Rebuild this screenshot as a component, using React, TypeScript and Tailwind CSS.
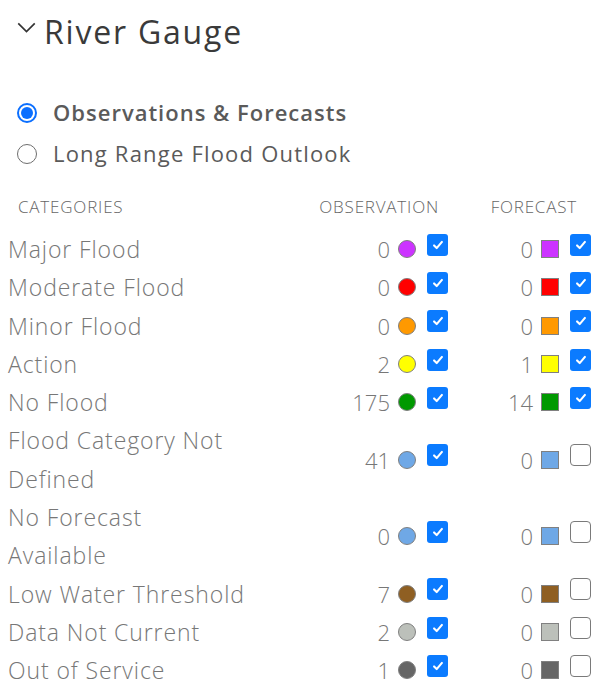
import { useState } from 'react';

type Row = {
  label: string[];
  obs: number;
  fc: number;
  color: string;
  obsOn: boolean;
  fcOn: boolean;
};

const rows: Row[] = [
  { label: ['Major Flood'], obs: 0, fc: 0, color: 'bg-[#cc33ff]', obsOn: true, fcOn: true },
  { label: ['Moderate Flood'], obs: 0, fc: 0, color: 'bg-[#ff0000]', obsOn: true, fcOn: true },
  { label: ['Minor Flood'], obs: 0, fc: 0, color: 'bg-[#ff9900]', obsOn: true, fcOn: true },
  { label: ['Action'], obs: 2, fc: 1, color: 'bg-[#ffff00]', obsOn: true, fcOn: true },
  { label: ['No Flood'], obs: 175, fc: 14, color: 'bg-[#009900]', obsOn: true, fcOn: true },
  { label: ['Flood Category Not', 'Defined'], obs: 41, fc: 0, color: 'bg-[#6fa8e6]', obsOn: true, fcOn: false },
  { label: ['No Forecast', 'Available'], obs: 0, fc: 0, color: 'bg-[#6fa8e6]', obsOn: true, fcOn: false },
  { label: ['Low Water Threshold'], obs: 7, fc: 0, color: 'bg-[#8f5f22]', obsOn: true, fcOn: false },
  { label: ['Data Not Current'], obs: 2, fc: 0, color: 'bg-[#bcc0ba]', obsOn: true, fcOn: false },
  { label: ['Out of Service'], obs: 1, fc: 0, color: 'bg-[#666666]', obsOn: true, fcOn: false },
];

function Check({ on }: { on: boolean }) {
  if (!on) {
    return <span className="block w-[21px] h-[22px] rounded-[4px] border-[1.5px] border-[#7a7a7a] bg-white" />;
  }
  return (
    <span className="flex items-center justify-center w-[21px] h-[22px] rounded-[3px] bg-[#0b7bff]">
      <svg viewBox="0 0 16 16" className="w-[14px] h-[14px]" fill="none" stroke="white" strokeWidth="2.4" strokeLinecap="round" strokeLinejoin="round">
        <path d="M3.5 8.5l3 3 6-7" />
      </svg>
    </span>
  );
}

function Radio({ on }: { on: boolean }) {
  return on ? (
    <span className="flex items-center justify-center w-[20px] h-[20px] rounded-full border-2 border-[#0b6fff]">
      <span className="w-[12px] h-[12px] rounded-full bg-[#0b6fff]" />
    </span>
  ) : (
    <span className="w-[20px] h-[20px] rounded-full border-[1.5px] border-[#6e6e6e]" />
  );
}

export default function App() {
  const [mode, setMode] = useState('obs');

  return (
    <main className="w-[600px] h-[685px] bg-white overflow-hidden text-[#6e6e6e]" style={{ fontFamily: '"Open Sans", Lato, sans-serif' }}>
      {/* heading */}
      <div className="flex items-center h-[64px] pl-[17px]">
        <svg viewBox="0 0 20 12" className="w-[19px] h-[11px] -mt-[10px]" fill="none" stroke="#333" strokeWidth="1.8">
          <path d="M1 1.5l9 9 9-9" />
        </svg>
        <h1 className="ml-[8px] text-[32px] tracking-[1.8px] text-[#3a3a3a] leading-none">River Gauge</h1>
      </div>

      {/* mode radios */}
      <div className="mt-[28px] pl-[17px]">
        <label className="flex items-center h-[41px] cursor-pointer" onClick={() => setMode('obs')}>
          <Radio on={mode === 'obs'} />
          <span className="ml-[16px] text-[22px] tracking-[1px] font-semibold text-[#5a5a5a]">Observations &amp; Forecasts</span>
        </label>
        <label className="flex items-center h-[41px] cursor-pointer" onClick={() => setMode('lr')}>
          <Radio on={mode === 'lr'} />
          <span className="ml-[16px] text-[22px] tracking-[1.2px] text-[#5a5a5a]">Long Range Flood Outlook</span>
        </label>
      </div>

      {/* table header */}
      <div className="flex items-center h-[34px] mt-[16px] pl-[8px] text-[17px] tracking-[0.8px] font-light text-[#666] uppercase">
        <div className="w-[245px] pl-[10px]">Categories</div>
        <div className="w-[195px] text-right pr-[9px]">Observation</div>
        <div className="w-[143px] text-right pr-[14px]">Forecast</div>
      </div>

      {/* rows */}
      <div className="mt-[6px] pl-[8px]">
        {rows.map((r) => (
          <div key={r.label.join(' ')} className="flex items-center text-[23px] tracking-[0.9px] font-light leading-[38.3px]">
            <div className="w-[245px] text-[#777]">
              {r.label.map((l) => (
                <div key={l}>{l}</div>
              ))}
            </div>
            <div className="w-[195px] flex items-center justify-end text-[22px] tracking-normal">
              <span className="text-[#777]">{r.obs}</span>
              <span className={`ml-[8px] w-[18px] h-[18px] rounded-full border border-[#808080] ${r.color}`} />
              <span className="ml-[11px] -mt-[9px]">
                <Check on={r.obsOn} />
              </span>
            </div>
            <div className="w-[143px] flex items-center justify-end text-[22px] tracking-normal">
              <span className="text-[#777]">{r.fc}</span>
              <span className={`ml-[8px] w-[18px] h-[18px] border border-[#808080] ${r.color}`} />
              <span className="ml-[11px] -mt-[9px]">
                <Check on={r.fcOn} />
              </span>
            </div>
          </div>
        ))}
      </div>
    </main>
  );
}
